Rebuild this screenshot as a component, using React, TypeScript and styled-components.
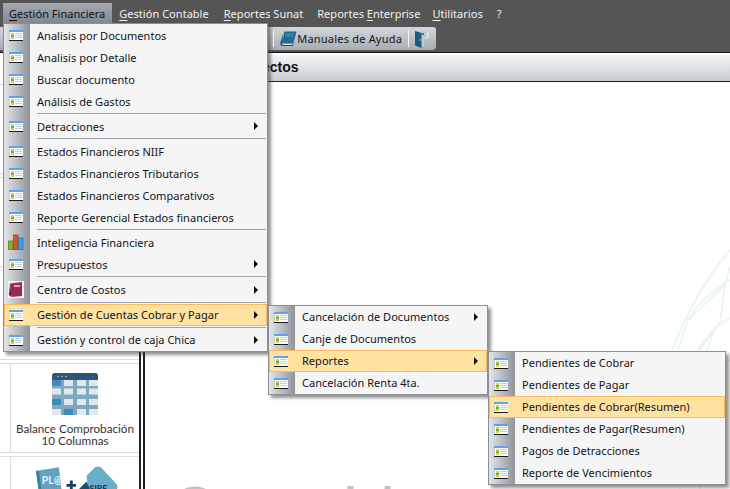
import React from "react";
import styled, { createGlobalStyle } from "styled-components";

const Global = createGlobalStyle`
  html, body { margin: 0; padding: 0; width: 730px; height: 489px; overflow: hidden; background: #fff; }
  * { box-sizing: border-box; }
  #root { width: 730px; height: 489px; }
`;

const uiFont = `"Noto Sans", "Open Sans", sans-serif`;

const Page = styled.div`
  position: relative;
  width: 730px;
  height: 489px;
  overflow: hidden;
  display: flex;
  flex-direction: column;
  font-family: ${uiFont};
  font-size: 11px;
  letter-spacing: 0.03px;
`;

const TopBar = styled.nav`
  height: 23px;
  flex: none;
  background: #555555;
  display: flex;
  align-items: flex-end;
  padding-left: 3px;
`;

const TopItem = styled.div<{ $open?: boolean; $after?: number }>`
  height: 20px;
  line-height: 21px;
  padding: 0 7px 0 6px;
  margin-right: ${(p) => p.$after ?? 1}px;
  color: ${(p) => (p.$open ? "#111" : "#f2f2f2")};
  background: ${(p) => (p.$open ? "linear-gradient(#a4abb3, #7f8790)" : "transparent")};
  u { text-underline-offset: 2px; }
`;

const ToolArea = styled.div`
  height: 29px;
  flex: none;
  background: #555555;
  padding-top: 4px;
`;

const ToolStrip = styled.div`
  width: 436px;
  height: 23px;
  border-radius: 0 3px 4px 0;
  background: linear-gradient(#d3d6da, #a7adb4);
  display: flex;
  align-items: center;
  justify-content: flex-end;
  padding-right: 7px;
  color: #10151c;
`;

const ToolSep = styled.span`
  width: 1px;
  height: 17px;
  background: #f4f5f6;
  margin: 0 6px;
  flex: none;
`;

const ToolLabel = styled.span`
  letter-spacing: 0.2px;
`;

const Body = styled.div`
  flex: 1;
  min-height: 0;
  overflow: hidden;
  display: flex;
  background: #fff;
  border-top: 1px solid #111;
`;

const Sidebar = styled.aside`
  width: 141px;
  flex: none;
  height: 100%;
  overflow: hidden;
  border-right: 2px solid #222;
  padding-top: 28px;
`;

const Tile = styled.div`
  height: 90px;
  border-top: 1px solid #dcdcdc;
  border-bottom: 1px solid #dcdcdc;
  margin-top: 3px;
  padding-left: 10px;
`;

const TileInner = styled.div`
  height: 100%;
  border-left: 1px solid #dcdcdc;
  display: flex;
  flex-direction: column;
  align-items: center;
  padding-top: 9px;
`;

const TileArt = styled.div<{ $shift?: number }>`
  height: 42px;
  flex: none;
  margin-left: ${(p) => p.$shift ?? 0}px;
`;

const TileText = styled.div`
  font-family: "Lato", sans-serif;
  font-size: 11.7px;
  line-height: 12px;
  letter-spacing: 0;
  text-align: center;
  white-space: nowrap;
  color: #333;
  margin-top: 7px;
`;

const Splitter = styled.div`
  width: 2px;
  flex: none;
`;

const Main = styled.main`
  flex: 1;
  min-width: 0;
  position: relative;
  overflow: hidden;
  border-left: 2px solid #222;
  margin-top: 2px;
  background: #fff;
`;

const MainHead = styled.header`
  height: 27px;
  background: linear-gradient(#f3f4f5, #c9cdd1);
  border-bottom: 1px solid #222;
  font-family: "Liberation Sans", Arial, sans-serif;
  font-weight: 700;
  font-size: 14px;
  letter-spacing: 0;
  line-height: 25px;
  color: #111;
  padding-left: 36px;
  white-space: nowrap;
`;

const Watermark = styled.div`
  padding: 394px 0 0 24px;
  font-family: "Lato", sans-serif;
  font-size: 66px;
  line-height: 66px;
  letter-spacing: 0;
  color: #c2c2c2;
  white-space: nowrap;
`;

const Leaves = styled.svg`
  position: absolute;
  left: 515px;
  top: 185px;
`;

const Menu = styled.div<{ $left: number; $top: number; $width: number }>`
  position: absolute;
  left: ${(p) => p.$left}px;
  top: ${(p) => p.$top}px;
  width: ${(p) => p.$width}px;
  background: linear-gradient(to right, #e4e5e7 0, #8f949b 26px, #f5f5f5 26px);
  border: 1px solid #8b9097;
  box-shadow: 3px 3px 3px rgba(60, 60, 60, 0.55);
  color: #10141a;
`;

const Row = styled.div<{ $active?: boolean; $tall?: boolean }>`
  height: ${(p) => (p.$tall ? 23 : 22)}px;
  display: flex;
  align-items: center;
  white-space: nowrap;
  border: 1px solid ${(p) => (p.$active ? "#fdb95f" : "transparent")};
  background: ${(p) => (p.$active ? "#ffe1a0" : "transparent")};
`;

const IconSlot = styled.span`
  width: 25px;
  flex: none;
  display: flex;
  justify-content: center;
  padding-right: 3px;
`;

const RowText = styled.span<{ $lift?: boolean }>`
  margin-left: 7px;
  padding-bottom: ${(p) => (p.$lift ? 1 : 0)}px;
  flex: 1;
`;

const Arrow = styled.span`
  width: 0;
  height: 0;
  border-left: 4px solid #111;
  border-top: 4px solid transparent;
  border-bottom: 4px solid transparent;
  margin-right: 8px;
  flex: none;
`;

const Sep = styled.div`
  height: 3px;
  margin-left: 33px;
  margin-right: 1px;
  display: flex;
  align-items: center;
  &::before {
    content: "";
    flex: 1;
    height: 1px;
    background: #9ba3af;
  }
`;

const FormIcon = () => (
  <svg width="14" height="11" viewBox="0 0 14 11">
    <rect x="0" y="0" width="14" height="11" fill="#fdfdfd" />
    <rect x="0" y="0" width="14" height="2" fill="#5ba4ea" />
    <rect x="0" y="10" width="14" height="1" fill="#1a1a1a" />
    <rect x="0" y="2" width="1" height="8" fill="#c9d2da" />
    <rect x="2" y="3" width="3" height="2" fill="#d8cf45" />
    <rect x="2" y="5" width="3" height="2" fill="#5db84a" />
    <rect x="2" y="7" width="3" height="2" fill="#d8cf45" />
    <rect x="6" y="3" width="7" height="1" fill="#cccccc" />
    <rect x="6" y="5" width="7" height="1" fill="#cccccc" />
    <rect x="6" y="7" width="7" height="1" fill="#cccccc" />
  </svg>
);

const BarsIcon = () => (
  <svg width="16" height="16" viewBox="0 0 16 16">
    <rect x="0.5" y="7" width="4.5" height="8.5" fill="#7db52c" stroke="#4d7a16" strokeWidth="0.7" />
    <rect x="5.5" y="1" width="4.5" height="14.5" fill="#e0512e" stroke="#a03018" strokeWidth="0.7" />
    <rect x="10.5" y="4" width="4.5" height="11.5" fill="#42a0e0" stroke="#1f6ea6" strokeWidth="0.7" />
  </svg>
);

const CostIcon = () => (
  <svg width="16" height="17" viewBox="0 0 16 17">
    <rect width="16" height="17" fill="#f4f0f1" />
    <path d="M2 2.5 L14 1 V15 L3.5 16 Z" fill="#972a55" />
    <path d="M2 2.5 L3.5 16 L1 14 Z" fill="#5a1230" />
    <rect x="6" y="4" width="6" height="2" fill="#d9a3ba" />
  </svg>
);

const BookIcon = () => (
  <svg width="17" height="16" viewBox="0 0 17 16">
    <path d="M4.5 0.5 H16.5 L13.5 12 H2 Z" fill="#1f6a94" />
    <path d="M2 12 H13.5 L13 15 H2.5 C0.5 15 0 13 0.6 11 L3.5 1.5 Z" fill="#174d6e" />
    <path d="M2.2 12.6 H12.8 L12.4 14 H2.2 Z" fill="#d6e3ea" />
    <path d="M6 3 H14 M5.4 5 H13.4" stroke="#5ea3c8" strokeWidth="0.8" />
  </svg>
);

const DoorIcon = () => (
  <svg width="14" height="18" viewBox="0 0 14 18">
    <path d="M0 1 H9 V16 H0 Z" fill="#c4ccd3" />
    <path d="M0 1 L6.5 3 V18 L0 15.5 Z" fill="#1d5a80" />
    <path d="M6.5 3 H9 V5 H6.5 Z" fill="#39779c" />
    <circle cx="5" cy="10" r="0.7" fill="#d8e6ee" />
    <path d="M10 8 H13 M13 8 V3 M11.5 4.6 L13 3 L14 4.6" stroke="#eef2f5" strokeWidth="1" fill="none" />
  </svg>
);

const TableArt = () => (
  <svg width="46" height="42" viewBox="0 0 46 42">
    <rect width="46" height="42" rx="3" fill="#7fa9c2" />
    <path d="M0 7 V3 a3 3 0 0 1 3 -3 H43 a3 3 0 0 1 3 3 V7 Z" fill="#2c5577" />
    <circle cx="6" cy="3.5" r="0.8" fill="#b9cbd8" />
    <circle cx="10" cy="3.5" r="0.8" fill="#b9cbd8" />
    <circle cx="14" cy="3.5" r="0.8" fill="#b9cbd8" />
    {[0, 1, 2, 3].map((r) =>
      [0, 1, 2, 3].map((c) => {
        const blue = (r === 0 && c === 0) || (r === 2 && c === 0) || (r === 3 && c === 1);
        return (
          <rect
            key={`${r}-${c}`}
            x={[0, 12, 25, 37][c]}
            y={[7, 15.5, 26, 36][r]}
            width={9}
            height={6}
            fill={blue ? "#3e8bb8" : "#e2e7e8"}
          />
        );
      })
    )}
  </svg>
);

const PlusSireArt = () => (
  <svg width="82" height="33" viewBox="0 0 86 34">
    <path d="M0 5 L24 1 L28 34 H4 Z" fill="#5fa3bf" />
    <path d="M0 5 L3 4.5 L7 34 H4 Z" fill="#3f7f9c" />
    <text x="6" y="19" fontFamily="Lato, sans-serif" fontWeight="700" fontSize="11" fill="#e8f2f6">PL@</text>
    <path d="M32 20 H42 M37 15 V25" stroke="#123f62" strokeWidth="3" />
    <path d="M62 1 Q66 -1 69 2 L84 18 Q87 22 84 25 L78 34 H56 L53 10 Z" fill="#68aec8" />
    <path d="M44 25 L53 16 L57 25 V34 H44 Z" fill="#17506f" />
    <text x="56" y="27" fontFamily="Lato, sans-serif" fontWeight="900" fontSize="9" fill="#123f62">SIRE</text>
  </svg>
);

const LeafPaths = () => (
  <g fill="none" stroke="#e7f5ea" strokeWidth="1.8">
    <path d="M12 110 C24 80 44 40 70 10" />
    <path d="M18 110 C24 90 28 80 30 77 C40 60 55 50 70 40" />
    <path d="M28 80 L65 45 L70 27" />
    <path d="M65 45 L60 82 L40 110" />
    <path d="M37 110 L55 88 L70 78" />
    <path d="M55 88 L47 110" />
    <path d="M40 110 L20 249 M47 110 L40 249 M60 130 L70 120" />
  </g>
);

type Item =
  | { sep: true }
  | {
      label: string;
      icon?: "form" | "bars" | "cost";
      sub?: boolean;
      active?: boolean;
      tall?: boolean;
      lift?: boolean;
    };

const level1: Item[] = [
  { label: "Analisis por Documentos" },
  { label: "Analisis por Detalle" },
  { label: "Buscar documento" },
  { label: "Análisis de Gastos" },
  { sep: true },
  { label: "Detracciones", sub: true },
  { sep: true },
  { label: "Estados Financieros NIIF" },
  { label: "Estados Financieros Tributarios" },
  { label: "Estados Financieros Comparativos" },
  { label: "Reporte Gerencial Estados financieros" },
  { sep: true },
  { label: "Inteligencia Financiera", icon: "bars" },
  { label: "Presupuestos", sub: true },
  { sep: true },
  { label: "Centro de Costos", sub: true, icon: "cost", tall: true, lift: true },
  { sep: true },
  { label: "Gestión de Cuentas Cobrar y Pagar", sub: true, active: true, lift: true },
  { sep: true },
  { label: "Gestión y control de caja Chica", sub: true, lift: true },
];

const level2: Item[] = [
  { label: "Cancelación de Documentos", sub: true, lift: true },
  { label: "Canje de Documentos", lift: true },
  { label: "Reportes", sub: true, active: true, lift: true },
  { label: "Cancelación Renta 4ta.", lift: true },
];

const level3: Item[] = [
  { label: "Pendientes de Cobrar", lift: true },
  { label: "Pendientes de Pagar", lift: true },
  { label: "Pendientes de Cobrar(Resumen)", active: true, lift: true },
  { label: "Pendientes de Pagar(Resumen)", lift: true },
  { label: "Pagos de Detracciones", lift: true },
  { label: "Reporte de Vencimientos", lift: true },
];

const icons = { form: FormIcon, bars: BarsIcon, cost: CostIcon };

const MenuList = ({ items, left, top, width }: { items: Item[]; left: number; top: number; width: number }) => (
  <Menu $left={left} $top={top} $width={width}>
    {items.map((it, i) => {
      if ("sep" in it) return <Sep key={i} />;
      const Icon = icons[it.icon ?? "form"];
      return (
        <Row key={i} $active={it.active} $tall={it.tall}>
          <IconSlot>
            <Icon />
          </IconSlot>
          <RowText $lift={it.lift}>{it.label}</RowText>
          {it.sub && <Arrow />}
        </Row>
      );
    })}
  </Menu>
);

export default function App() {
  return (
    <Page>
      <Global />
      <TopBar>
        <TopItem $open $after={1}>
          <u>G</u>estión Financiera
        </TopItem>
        <TopItem $after={2}>
          <u>G</u>estión Contable
        </TopItem>
        <TopItem $after={1}>
          <u>R</u>eportes Sunat
        </TopItem>
        <TopItem $after={-1}>
          Reportes <u>E</u>nterprise
        </TopItem>
        <TopItem $after={1}>
          <u>U</u>tilitarios
        </TopItem>
        <TopItem>?</TopItem>
      </TopBar>
      <ToolArea>
        <ToolStrip>
          <ToolSep />
          <BookIcon />
          <ToolLabel>Manuales de Ayuda</ToolLabel>
          <ToolSep />
          <DoorIcon />
        </ToolStrip>
      </ToolArea>
      <Body>
        <Sidebar>
          <Tile />
          <Tile />
          <Tile />
          <Tile>
            <TileInner>
              <TileArt>
                <TableArt />
              </TileArt>
              <TileText>
                Balance Comprobación
                <br />
                10 Columnas
              </TileText>
            </TileInner>
          </Tile>
          <Tile>
            <TileInner>
              <TileArt $shift={4}>
                <PlusSireArt />
              </TileArt>
            </TileInner>
          </Tile>
        </Sidebar>
        <Splitter />
        <Main>
          <MainHead>Accesos Directos</MainHead>
          <Watermark>Contable</Watermark>
          <Leaves width="70" height="249" viewBox="0 0 70 249">
            <LeafPaths />
          </Leaves>
        </Main>
      </Body>
      <MenuList items={level1} left={3} top={23} width={265} />
      <MenuList items={level2} left={268} top={305} width={220} />
      <MenuList items={level3} left={488} top={351} width={238} />
    </Page>
  );
}
